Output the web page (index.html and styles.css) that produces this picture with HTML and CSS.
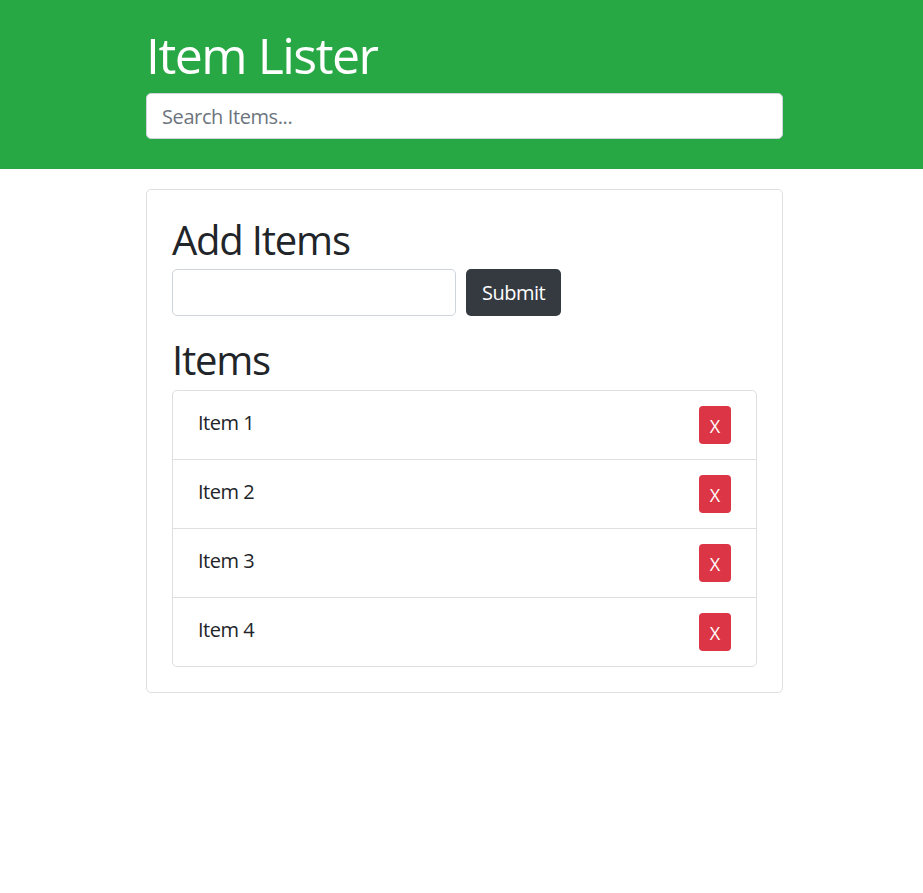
FILE: index.html
```html
<!DOCTYPE html>
<html lang="en">
<head>
<meta charset="utf-8">
<title>Item Lister</title>
<link rel="stylesheet" href="styles.css">
</head>
<body>
<header class="header">
  <div class="container">
    <h1 class="title">Item Lister</h1>
    <input class="form-control" type="text" placeholder="Search Items...">
  </div>
</header>
<main class="container">
  <div class="card">
    <h2 class="heading">Add Items</h2>
    <form class="add-form">
      <input class="form-control add-input" type="text">
      <button class="btn btn-dark" type="button">Submit</button>
    </form>
    <h2 class="heading items-heading">Items</h2>
    <ul class="list-group">
      <li class="list-item"><span class="item-text">Item 1</span><button class="btn-del" type="button">X</button></li>
      <li class="list-item"><span class="item-text">Item 2</span><button class="btn-del" type="button">X</button></li>
      <li class="list-item"><span class="item-text">Item 3</span><button class="btn-del" type="button">X</button></li>
      <li class="list-item"><span class="item-text">Item 4</span><button class="btn-del" type="button">X</button></li>
    </ul>
  </div>
</main>
</body>
</html>
```
FILE: styles.css
```css
* { box-sizing: border-box; }
body {
  margin: 0;
  font-family: "Open Sans", "Noto Sans", sans-serif;
  font-size: 20px;
  line-height: 30px;
  color: #212529;
  background: #fff;
}
.container {
  width: 637px;
  margin-left: 146px;
}
.header {
  background: #28a745;
  padding: 23px 0 30px;
}
.title {
  margin: 0 0 8px;
  padding-top: 2px;
  font-size: 50px;
  line-height: 60px;
  font-weight: 400;
  letter-spacing: -1.5px;
  color: #fff;
}
.form-control {
  display: block;
  width: 100%;
  height: 46px;
  padding: 0 15px;
  font-family: inherit;
  font-size: 20px;
  letter-spacing: -0.4px;
  color: #495057;
  background: #fff;
  border: 1px solid #ced4da;
  border-radius: 5px;
  outline: none;
}
.form-control::placeholder { color: #6c757d; }
.card {
  margin-top: 20px;
  border: 1px solid rgba(0,0,0,.125);
  border-radius: 5px;
  padding: 25px;
}
.heading {
  margin: 0 0 5px;
  padding-top: 1px;
  font-size: 40px;
  line-height: 48px;
  font-weight: 400;
  letter-spacing: -1.2px;
}
.items-heading {
  margin: 19px 0 6px;
}
.add-form {
  display: flex;
  gap: 10px;
}
.add-input {
  width: 284px;
  height: 47px;
}
.btn {
  height: 47px;
  padding: 0 15px;
  font-family: inherit;
  font-size: 20px;
  letter-spacing: -0.5px;
  border: 1px solid transparent;
  border-radius: 5px;
}
.btn-dark {
  width: 95px;
  background: #343a40;
  color: #fff;
}
.list-group {
  list-style: none;
  margin: 0;
  padding: 0;
  border: 1px solid rgba(0,0,0,.125);
  border-radius: 5px;
}
.list-item {
  display: flex;
  justify-content: space-between;
  align-items: flex-start;
  padding: 15px 25px;
  letter-spacing: -0.5px;
}
.list-item + .list-item {
  border-top: 1px solid rgba(0,0,0,.125);
}
.item-text {
  padding-top: 2px;
}
.btn-del {
  width: 32px;
  height: 38px;
  padding: 0;
  font-family: inherit;
  font-size: 18px;
  line-height: 40px;
  color: #fff;
  background: #dc3545;
  border: none;
  border-radius: 4px;
}
```
